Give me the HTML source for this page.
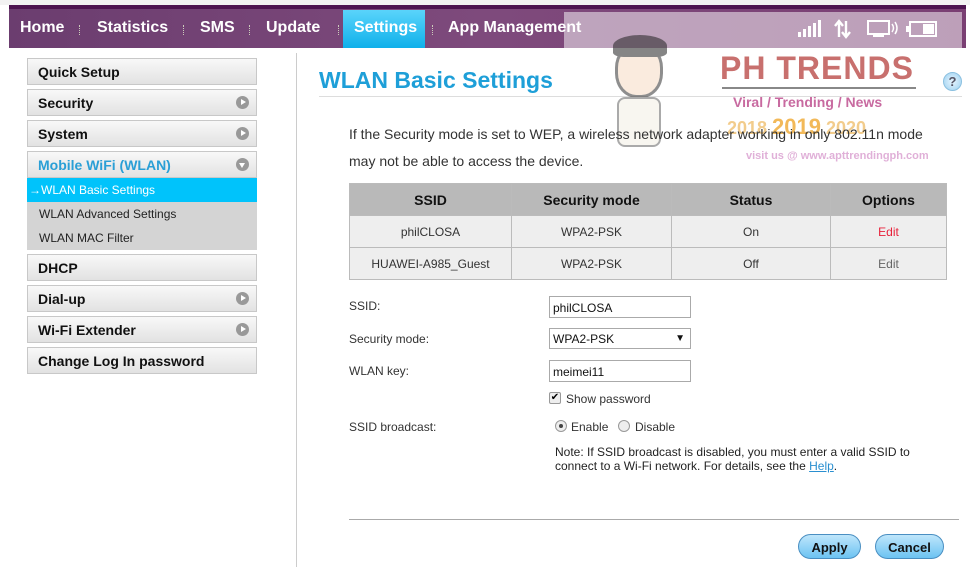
<!DOCTYPE html>
<html><head><meta charset="utf-8"><style>
*{margin:0;padding:0;box-sizing:border-box}
body{width:970px;height:567px;background:#fff;font-family:"Liberation Sans",Arial,sans-serif;position:relative;overflow:hidden}
.a{position:absolute}
.nav{left:9px;top:5px;width:957px;height:43px;background:linear-gradient(90deg,#6b3d6f,#7e4a7c 50%,#7a3f73);border-top:4px solid #4d1450}
.ni{top:19px;color:#fff;font-weight:bold;font-size:16px}
.sep{top:25px;width:1px;height:10px;border-left:1px dotted #ccb;}
.side{left:27px;width:230px;height:27px;border:1px solid #c8c8c8;background:linear-gradient(#f8f8f8,#e2e2e2);font-weight:bold;font-size:14px;padding:5px 0 0 10px;color:#111}
.arr{position:absolute;right:7px;top:6px;width:13px;height:13px;border-radius:50%;background:#999}
.arr:after{content:"";position:absolute;left:5px;top:3px;border-left:5px solid #fff;border-top:3.5px solid transparent;border-bottom:3.5px solid transparent}
.dn:after{left:3px;top:5px;border-top:5px solid #fff;border-left:3.5px solid transparent;border-right:3.5px solid transparent;border-bottom:0}
.sub{left:27px;width:230px;height:24px;font-size:12px;padding:5px 0 0 12px;color:#222;background:#d4d4d4}
td{border:1px solid #bbb;text-align:center;font-size:12px;color:#333;height:32px;background:#eee}
th{border:1px solid #bbb;background:#b9b9b9;font-size:14px;height:32px;color:#111}
.lb{left:349px;font-size:12px;color:#333}
.in{left:549px;width:142px;height:22px;border:1px solid #aaa;font-size:12px;padding:4px 0 0 3px;color:#111}
.btn{top:534px;height:25px;border:1px solid #4a8fc2;border-radius:13px;background:linear-gradient(#bfe6fb,#6cc3f2);font-weight:bold;font-size:13px;text-align:center;padding-top:5px;color:#111}
</style></head><body>
<div class="a" style="left:0;top:0;width:970px;height:5px;background:#f2f2f2"></div>
<div class="a nav"></div>
<div class="a" style="left:343px;top:10px;width:82px;height:38px;background:linear-gradient(#5ad4fb,#0fb0ea)"></div>
<div class="a ni" style="left:20px">Home</div>
<div class="a sep" style="left:79px"></div>
<div class="a ni" style="left:97px">Statistics</div>
<div class="a sep" style="left:183px"></div>
<div class="a ni" style="left:200px">SMS</div>
<div class="a sep" style="left:249px"></div>
<div class="a ni" style="left:266px">Update</div>
<div class="a sep" style="left:338px"></div>
<div class="a ni" style="left:354px">Settings</div>
<div class="a sep" style="left:432px"></div>
<div class="a ni" style="left:448px">App Management</div>
<div class="a" style="left:564px;top:12px;width:398px;height:36px;background:rgba(255,255,255,0.5)"></div>
<svg class="a" style="left:798px;top:18px" width="140" height="22" viewBox="0 0 140 22" fill="#fff">
<rect x="0" y="14" width="3" height="5"/><rect x="5" y="11" width="3" height="8"/><rect x="10" y="8" width="3" height="11"/><rect x="15" y="5" width="3" height="14"/><rect x="20" y="2" width="3" height="17"/>
<path d="M41 19V4M37 8l4-5 4 5M48 3v15M44 14l4 5 4-5" stroke="#fff" stroke-width="2.4" fill="none"/>
<rect x="70" y="3" width="21" height="13" fill="none" stroke="#fff" stroke-width="2"/><rect x="75" y="17" width="11" height="2"/>
<path d="M94 6q3 4 0 8M97 4q4 6 0 12" stroke="#fff" stroke-width="1.5" fill="none"/>
<rect x="112" y="4" width="26" height="14" fill="none" stroke="#fff" stroke-width="2"/><rect x="108" y="8" width="3" height="6"/><rect x="125" y="6" width="11" height="10"/>
</svg>
<div class="a side" style="top:58px">Quick Setup</div>
<div class="a side" style="top:89px">Security<span class="arr"></span></div>
<div class="a side" style="top:120px">System<span class="arr"></span></div>
<div class="a side" style="top:151px;color:#2a9fd6">Mobile WiFi (WLAN)<span class="arr dn"></span></div>
<div class="a sub" style="top:178px;background:#00c3fb;color:#fff;padding-left:2px">→WLAN Basic Settings</div>
<div class="a sub" style="top:202px">WLAN Advanced Settings</div>
<div class="a sub" style="top:226px">WLAN MAC Filter</div>
<div class="a side" style="top:254px">DHCP</div>
<div class="a side" style="top:285px">Dial-up<span class="arr"></span></div>
<div class="a side" style="top:316px">Wi-Fi Extender<span class="arr"></span></div>
<div class="a side" style="top:347px">Change Log In password</div>
<div class="a" style="left:296px;top:53px;width:1px;height:514px;background:#ccc"></div>
<div class="a" style="left:319px;top:67px;font-size:23px;font-weight:bold;color:#1e9fd8">WLAN Basic Settings</div>
<div class="a" style="left:319px;top:96px;width:643px;height:1px;background:#ddd"></div>
<div class="a" style="left:943px;top:72px;width:19px;height:19px;border-radius:50%;background:radial-gradient(#e8f6ff,#9cd0f0);border:1px solid #8bc0e0;font-size:13px;font-weight:bold;color:#556;text-align:center;line-height:17px">?</div>
<div class="a" style="left:720px;top:50px;font-size:32px;font-weight:bold;color:#c8706e;letter-spacing:1px">PH TRENDS</div>
<div class="a" style="left:722px;top:87px;width:194px;height:2px;background:#888"></div>
<div class="a" style="left:733px;top:94px;font-size:14px;font-weight:bold;color:#c86aa0">Viral / Trending / News</div>
<div class="a" style="left:727px;top:114px;font-size:18px;font-weight:bold;color:#f0c070;opacity:.8">2018 <span style="color:#f0a830;font-size:22px">2019</span> 2020</div>
<div class="a" style="left:746px;top:150px;font-size:11px;font-weight:bold;color:#e0b0d8">visit us @ www.apttrendingph.com</div>
<div class="a" style="left:605px;top:35px;width:70px;height:125px;opacity:.55">
<div class="a" style="left:10px;top:8px;width:48px;height:55px;border-radius:45%;background:#f6dcc4;border:3px solid #333;border-top-color:#222"></div>
<div class="a" style="left:8px;top:0;width:54px;height:22px;border-radius:50% 50% 20% 20%;background:#222"></div>
<div class="a" style="left:12px;top:62px;width:44px;height:50px;border-radius:8px;background:#f4f0e4;border:2px solid #666"></div>
</div>
<div class="a" style="left:349px;top:121px;font-size:14px;color:#333;line-height:27px;width:600px">If the Security mode is set to WEP, a wireless network adapter working in only 802.11n mode<br>may not be able to access the device.</div>
<table class="a" style="left:349px;top:183px;width:598px;border-collapse:collapse">
<tr><th style="width:162px">SSID</th><th style="width:160px">Security mode</th><th style="width:159px">Status</th><th>Options</th></tr>
<tr><td>philCLOSA</td><td>WPA2-PSK</td><td>On</td><td style="color:#e8203a">Edit</td></tr>
<tr><td>HUAWEI-A985_Guest</td><td>WPA2-PSK</td><td>Off</td><td style="color:#666">Edit</td></tr>
</table>
<div class="a lb" style="top:299px">SSID:</div>
<div class="a in" style="top:296px">philCLOSA</div>
<div class="a lb" style="top:332px">Security mode:</div>
<div class="a in" style="top:328px;height:21px;padding-top:3px">WPA2-PSK<span style="position:absolute;right:5px;font-size:10px;top:4px">▼</span></div>
<div class="a lb" style="top:364px">WLAN key:</div>
<div class="a in" style="top:360px">meimei11</div>
<div class="a" style="left:549px;top:392px;width:12px;height:12px;border:1px solid #999;border-radius:2px;background:#eee;font-size:10px;line-height:10px;text-align:center">✔</div>
<div class="a lb" style="left:566px;top:392px">Show password</div>
<div class="a lb" style="top:420px">SSID broadcast:</div>
<div class="a" style="left:555px;top:420px;width:12px;height:12px;border:1px solid #999;border-radius:50%;background:#eee"><div style="margin:3px;width:4px;height:4px;border-radius:50%;background:#444"></div></div>
<div class="a lb" style="left:571px;top:420px">Enable</div>
<div class="a" style="left:618px;top:420px;width:12px;height:12px;border:1px solid #999;border-radius:50%;background:#eee"></div>
<div class="a lb" style="left:635px;top:420px">Disable</div>
<div class="a" style="left:555px;top:445px;font-size:12px;color:#222;line-height:14px">Note: If SSID broadcast is disabled, you must enter a valid SSID to<br>connect to a Wi-Fi network. For details, see the <span style="color:#2a8fd0;text-decoration:underline">Help</span>.</div>
<div class="a" style="left:349px;top:519px;width:610px;height:1px;background:#aaa"></div>
<div class="a btn" style="left:798px;width:63px">Apply</div>
<div class="a btn" style="left:875px;width:69px">Cancel</div>
</body></html>
